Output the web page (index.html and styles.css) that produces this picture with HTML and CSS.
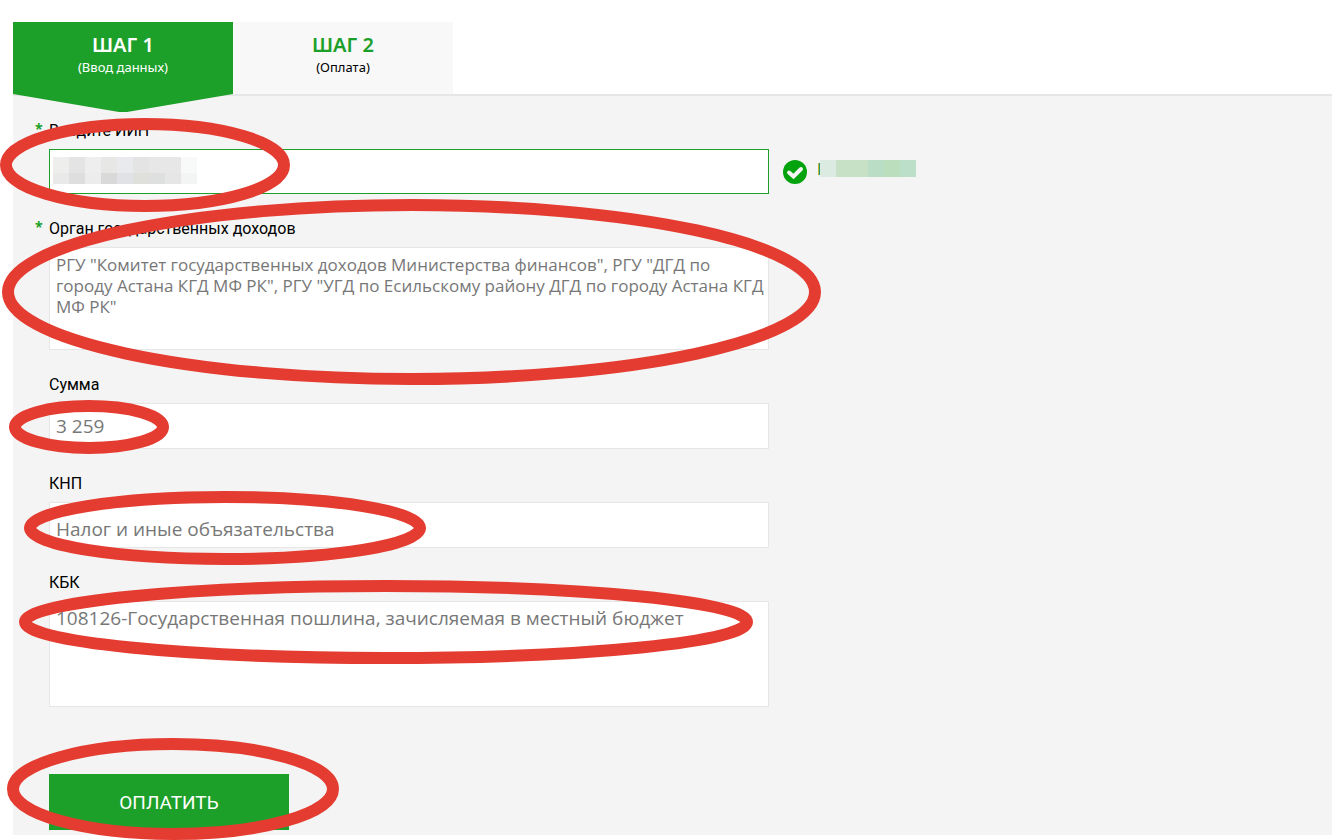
FILE: index.html
```html
<!DOCTYPE html>
<html lang="ru">
	<head>
		<meta charset="UTF-8" />
		<meta name="viewport" content="width=device-width, initial-scale=1.0" />
		<title>Оплата</title>
		<link rel="stylesheet" href="styles.css">
	</head>
	<body>
		<div class="payment">
			<ol class="steps">
				<li class="step stepActive">
					<strong>ШАГ 1</strong>
					<span>(Ввод данных)</span>
					<svg class="stepArrow" viewBox="0 0 220 17" preserveAspectRatio="none" aria-hidden="true">
						<path d="M0 0H220L114 17H106Z" />
					</svg>
				</li>
				<li class="step">
					<strong>ШАГ 2</strong>
					<span>(Оплата)</span>
				</li>
			</ol>

			<form class="paymentForm">
				<div class="field">
					<span class="required">*</span>
					<label for="iin">Введите ИИН</label>
					<div class="control">
						<input class="valid" id="iin" type="text" />
						<!-- hidden value -->
						<svg class="mosaic" width="144" height="27" viewBox="0 0 144 27" shape-rendering="crispEdges" aria-hidden="true">
							<rect x="0" width="16" height="16" fill="#eeeeec" />
							<rect x="16" width="16" height="16" fill="#e4e4e4" />
							<rect x="32" width="16" height="16" fill="#eeeeee" />
							<rect x="48" width="16" height="16" fill="#e7e7e5" />
							<rect x="64" width="16" height="16" fill="#e9eaed" />
							<rect x="80" width="16" height="16" fill="#e4e4e4" />
							<rect x="96" width="32" height="16" fill="#e7e7e7" />
							<rect x="128" width="16" height="16" fill="#f8faf9" />
							<rect x="0" y="16" width="16" height="11" fill="#e9e9e9" />
							<rect x="16" y="16" width="16" height="11" fill="#dedede" />
							<rect x="32" y="16" width="16" height="11" fill="#ececec" />
							<rect x="48" y="16" width="16" height="11" fill="#d9d9d9" />
							<rect x="64" y="16" width="16" height="11" fill="#e0e2e5" />
							<rect x="80" y="16" width="16" height="11" fill="#dfdfdc" />
							<rect x="96" y="16" width="16" height="11" fill="#dde0de" />
							<rect x="112" y="16" width="16" height="11" fill="#e6e6e6" />
							<rect x="128" y="16" width="16" height="11" fill="#f3f5f4" />
						</svg>
					</div>
					<div class="status">
						<svg width="24" height="24" viewBox="0 0 24 24" aria-hidden="true">
							<circle cx="12" cy="12" r="12" fill="#03a30d" />
							<path d="M6 12.500L10.500 16.500L18 9" fill="none" stroke="#f4f4f4" stroke-width="4" stroke-linecap="round" />
						</svg>
						<svg width="98" height="17" viewBox="0 0 98 17" shape-rendering="crispEdges" aria-hidden="true">
							<rect x="0" y="3" width="1" height="12" fill="#c5b62e" />
							<rect x="1" y="3" width="1" height="12" fill="#219c72" />
							<rect x="2" width="16" height="17" fill="#dcebe1" />
							<rect x="18" width="32" height="17" fill="#c7e1c7" />
							<rect x="50" width="16" height="17" fill="#b9dec5" />
							<rect x="66" width="16" height="17" fill="#bbdebd" />
							<rect x="82" width="16" height="17" fill="#bbdfc8" />
						</svg>
					</div>
				</div>

				<div class="field">
					<span class="required">*</span>
					<label for="organ">Орган государственных доходов</label>
					<textarea class="organ" id="organ" readonly>РГУ "Комитет государственных доходов Министерства финансов", РГУ "ДГД по
городу Астана КГД МФ РК", РГУ "УГД по Есильскому району ДГД по городу Астана КГД
МФ РК"</textarea>
				</div>

				<div class="field">
					<label for="amount">Сумма</label>
					<input id="amount" type="text" value="3 259" readonly />
				</div>

				<div class="field">
					<label for="knp">КНП</label>
					<input class="knp" id="knp" type="text" value="Налог и иные объязательства" readonly />
				</div>

				<div class="field">
					<label for="kbk">КБК</label>
					<textarea class="kbk" id="kbk" readonly>108126-Государственная пошлина, зачисляемая в местный бюджет</textarea>
				</div>

				<button class="payButton" type="button">ОПЛАТИТЬ</button>
			</form>

			<!-- red marks around the filled fields -->
			<svg class="marks" width="840" height="840" viewBox="0 0 840 840" aria-hidden="true">
				<ellipse cx="145" cy="165" rx="139" ry="41" />
				<ellipse cx="411.500" cy="292" rx="403.500" ry="87" />
				<ellipse cx="89" cy="427" rx="74" ry="21" />
				<ellipse cx="225" cy="528" rx="195" ry="31" />
				<ellipse cx="386" cy="622" rx="361" ry="36" />
				<ellipse cx="173" cy="789" rx="160" ry="45" />
			</svg>
		</div>
	</body>
</html>
```

FILE: styles.css
```css
* {
	box-sizing: border-box;
}

body {
	margin: 0;
	background: white;
	color: black;
	font-family: "Noto Sans", sans-serif;
}

.payment {
	position: relative;
	padding: 22px 0 5px 13px;
}

.steps {
	display: flex;
	margin: 0;
	padding: 0;
	list-style: none;
	border-bottom: 2px solid #e6e6e6;
}

.step {
	position: relative;
	display: flex;
	flex-direction: column;
	align-items: center;
	width: 220px;
	height: 72px;
	padding-top: 10px;
	background: #f8f8f8;
	font-size: 13px;
	line-height: 18px;
}

.step strong {
	color: #1ca02a;
	font-size: 20px;
	font-weight: 600;
	line-height: 26px;
}

.stepActive {
	background: #1ca02a;
	color: white;
}

.stepActive strong {
	color: white;
}

.stepArrow {
	position: absolute;
	top: 100%;
	left: 0;
	width: 100%;
	height: 18px;
	fill: #1ca02a;
}

.paymentForm {
	display: flex;
	flex-direction: column;
	gap: 24px;
	padding: 24px 22px 5px;
	background: #f4f4f4;
}

.field {
	display: grid;
	grid-template-columns: 14px minmax(0, 720px) 1fr;
	row-gap: 7px;
}

.required {
	grid-column: 1;
	color: #1ca02a;
	font-size: 14px;
	font-weight: bold;
	line-height: 18px;
}

.field label {
	grid-column: 2;
	font-family: Roboto, sans-serif;
	font-size: 16px;
	line-height: 22px;
}

.control {
	position: relative;
	grid-column: 2;
}

.field input,
.field textarea {
	display: block;
	grid-column: 2;
	width: 100%;
	height: 46px;
	margin: 0;
	padding: 0 6px;
	border: 1px solid #e6e6e6;
	border-radius: 0;
	outline: none;
	background: white;
	color: #777;
	font-family: "Open Sans", sans-serif;
	font-size: 19px;
	resize: none;
}

.field textarea {
	padding: 6px;
	line-height: 21px;
}

.field .valid {
	height: 45px;
	border-color: #1ca02a;
}

.field .organ {
	height: 103px;
	overflow: hidden;
	font-size: 17px;
	white-space: pre;
}

.field .knp {
	padding-top: 8px;
}

.field .kbk {
	height: 106px;
}

.mosaic {
	position: absolute;
	top: 8px;
	left: 4px;
}

.status {
	display: flex;
	grid-column: 3;
	align-items: flex-start;
	gap: 11px;
	padding: 11px 0 0 14px;
}

.payButton {
	width: 240px;
	height: 56px;
	margin: 43px 0 0 14px;
	border: none;
	background: #1ca02a;
	color: white;
	font-family: Roboto, sans-serif;
	font-size: 19px;
	cursor: pointer;
}

.marks {
	position: absolute;
	top: 0;
	left: 0;
	fill: none;
	stroke: #e43c31;
	stroke-width: 12px;
	pointer-events: none;
}
```
